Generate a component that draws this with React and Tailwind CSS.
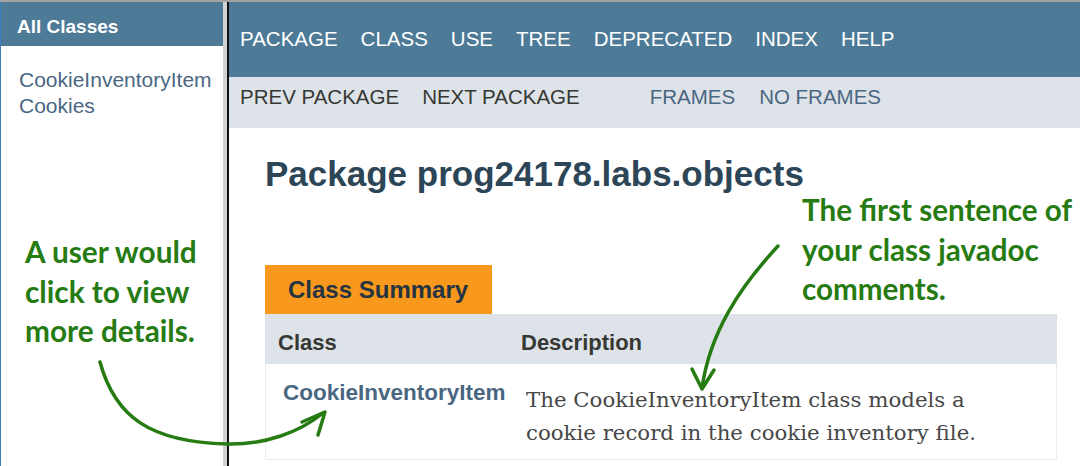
import React from 'react';

const navItems = ['PACKAGE', 'CLASS', 'USE', 'TREE', 'DEPRECATED', 'INDEX', 'HELP'];

export default function App() {
  return (
    <div className="relative w-[1080px] h-[466px] overflow-hidden bg-white border-t-2 border-[#a3a3a3] flex font-['Liberation_Sans',Arial,sans-serif]">
      {/* left frame */}
      <aside className="w-[223px] border-l border-[#3b7fc1] flex flex-col">
        <div className="h-[44px] bg-[#4d7a97] flex items-center pl-[16px] pt-[7px] text-white font-bold text-[19px]">All Classes</div>
        <ul className="pl-[18px] pt-[21px] text-[21px] leading-[26px] text-[#4a6782]">
          <li>CookieInventoryItem</li>
          <li>Cookies</li>
        </ul>
      </aside>
      <div className="w-[4px] bg-[#d2d2d2]" />
      <div className="w-[2px] bg-[#111]" />

      {/* main frame */}
      <main className="flex-1 flex flex-col">
        <nav className="h-[75px] bg-[#4d7a97] flex items-center pl-[11px] gap-[23px] text-white text-[20.5px]">
          {navItems.map((n) => (
            <span key={n}>{n}</span>
          ))}
        </nav>
        <div className="h-[51px] bg-[#dee3e9] flex items-center pl-[11px] pb-[10px] text-[20.5px]">
          <span className="text-[#353833]">PREV PACKAGE</span>
          <span className="text-[#353833] ml-[23px]">NEXT PACKAGE</span>
          <span className="text-[#4a6782] ml-[70px]">FRAMES</span>
          <span className="text-[#4a6782] ml-[24px]">NO FRAMES</span>
        </div>

        <div className="pl-[36px]">
          <h1 className="mt-[26px] text-[35px] leading-[40px] font-bold text-[#2c4557]">Package prog24178.labs.objects</h1>

          <div className="mt-[71px] w-[227px] h-[49px] bg-[#f8981d] flex items-center pl-[23px] text-[24px] font-bold text-[#253441]">
            Class Summary
          </div>
          <div className="w-[792px]">
            <div className="h-[50px] bg-[#dee3e9] flex items-center pt-[7px] text-[22px] font-bold text-[#353833]">
              <div className="w-[243px] pl-[13px]">Class</div>
              <div className="pl-[13px]">Description</div>
            </div>
            <div className="h-[96px] flex border-x border-b border-[#ececec]">
              <div className="w-[242px] pl-[17px] pt-[15px] text-[22.5px] leading-[28px] font-bold text-[#4a6782]">
                CookieInventoryItem
              </div>
              <div className="pl-[18px] pt-[20px] font-['DejaVu_Serif',Georgia,serif] text-[21.3px] leading-[32.5px] text-[#474747]">
                The CookieInventoryItem class models a<br />
                cookie record in the cookie inventory file.
              </div>
            </div>
          </div>
        </div>
      </main>

      {/* annotations */}
      <div className="absolute left-[25px] top-[230px] font-['Lato',sans-serif] font-bold text-[29.8px] leading-[39.5px] text-[#267b12]">
        A user would<br />click to view<br />more details.
      </div>
      <div className="absolute left-[802px] top-[188px] font-['Lato',sans-serif] font-bold text-[29.6px] leading-[39.5px] text-[#267b12]">
        The first sentence of<br />your class javadoc<br />comments.
      </div>
      <svg className="absolute left-0 top-0 pointer-events-none" width="1080" height="466" viewBox="0 0 1080 466" fill="none">
        <g stroke="#267b12" strokeWidth="3.5" strokeLinecap="round" strokeLinejoin="round">
          <path d="M100 360 C 115 415, 150 440, 227 442 C 265 443, 300 430, 323 411" />
          <path d="M302 420 L325 410 L318 433" />
          <path d="M778 244 C 740 285, 710 330, 702 386" />
          <path d="M692 367 L702 387 L714 368" />
        </g>
      </svg>
    </div>
  );
}
